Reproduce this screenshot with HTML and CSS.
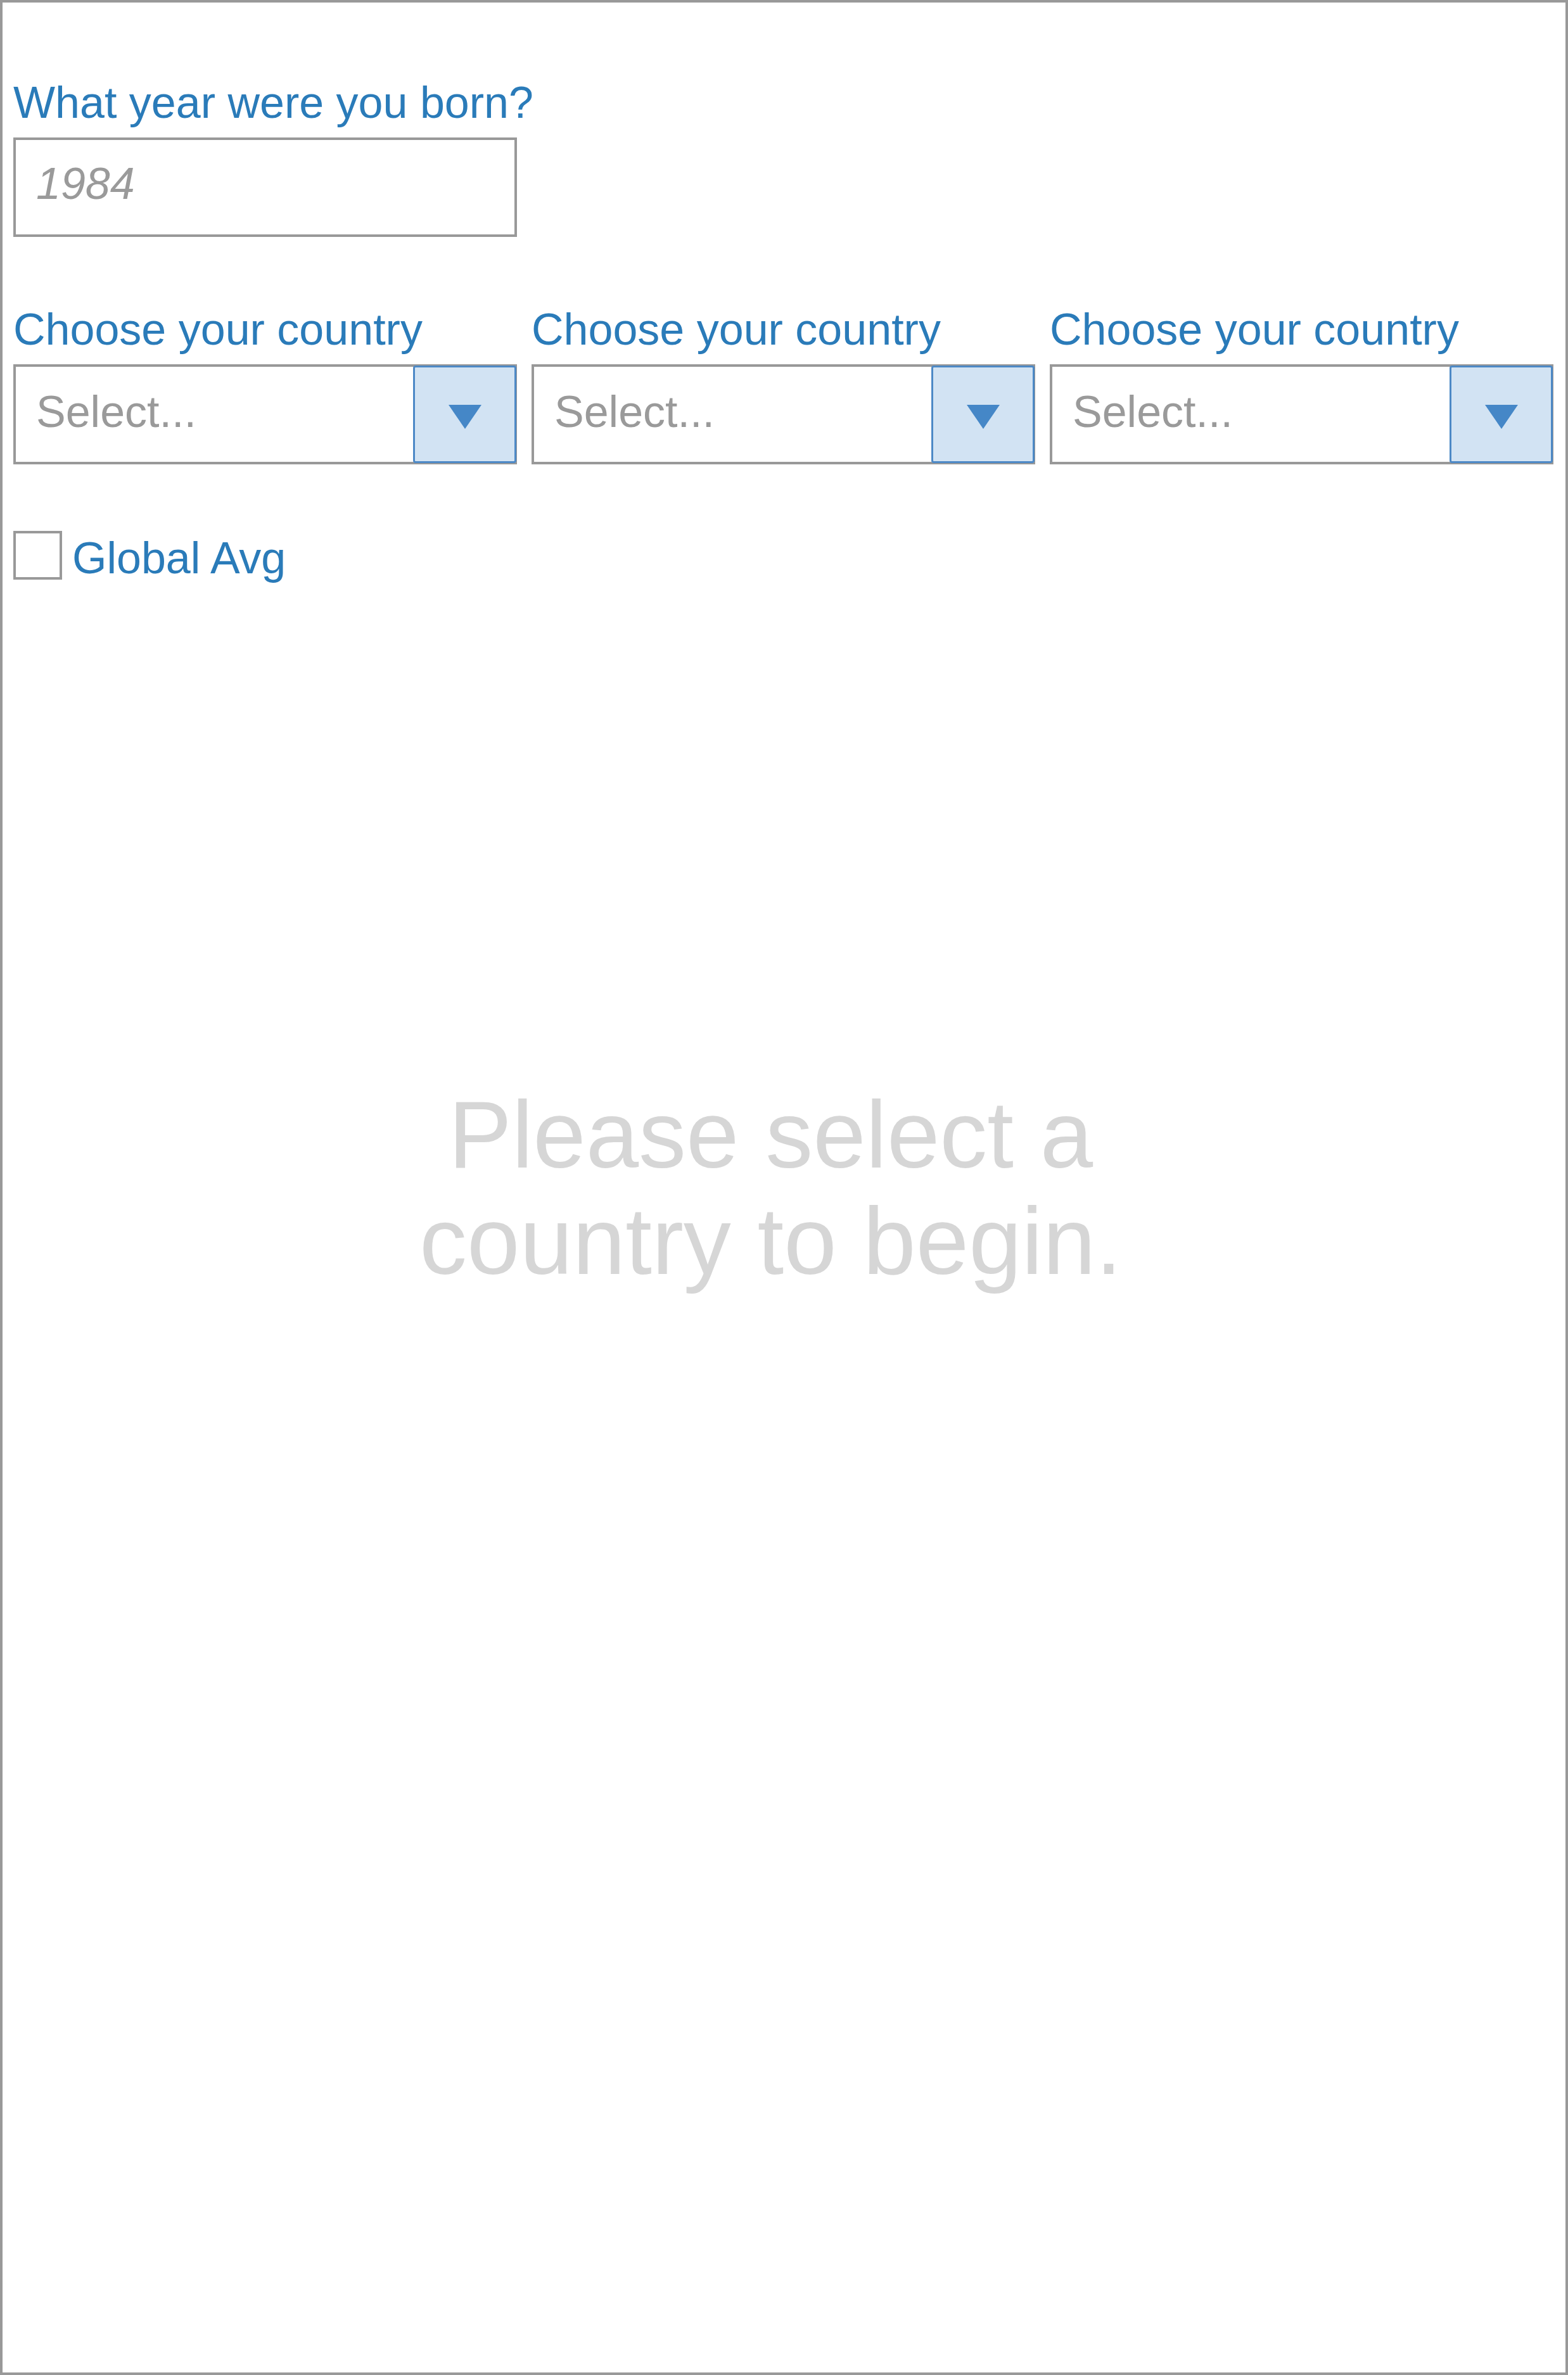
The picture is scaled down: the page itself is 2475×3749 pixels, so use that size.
FILE: index.html
```html
<!DOCTYPE html>
<html lang="en">
<head>
<meta charset="utf-8">
<title>Country picker</title>
<link rel="stylesheet" href="styles.css">
</head>
<body>
<div class="frame">
  <div class="row row-year">
    <div class="field">
      <label class="label">What year were you born?</label>
      <div class="textbox"><span class="placeholder placeholder-italic">1984</span></div>
    </div>
  </div>

  <div class="row row-countries">
    <div class="field">
      <label class="label">Choose your country</label>
      <div class="select">
        <span class="placeholder">Select...</span>
        <span class="select-btn"><svg class="caret" width="52" height="38" viewBox="0 0 52 38"><polygon points="0,0 52,0 26,38"/></svg></span>
      </div>
    </div>
    <div class="field">
      <label class="label">Choose your country</label>
      <div class="select">
        <span class="placeholder">Select...</span>
        <span class="select-btn"><svg class="caret" width="52" height="38" viewBox="0 0 52 38"><polygon points="0,0 52,0 26,38"/></svg></span>
      </div>
    </div>
    <div class="field">
      <label class="label">Choose your country</label>
      <div class="select">
        <span class="placeholder">Select...</span>
        <span class="select-btn"><svg class="caret" width="52" height="38" viewBox="0 0 52 38"><polygon points="0,0 52,0 26,38"/></svg></span>
      </div>
    </div>
  </div>

  <label class="check">
    <span class="check-box"></span>
    <span class="check-text">Global Avg</span>
  </label>

  <div class="empty">
    <p class="empty-text">Please select a country to begin.</p>
  </div>
</div>
</body>
</html>
```

FILE: styles.css
```css
html, body {
  margin: 0;
  padding: 0;
  background: #ffffff;
}

body {
  font-family: "Liberation Sans", Arial, sans-serif;
}

.frame {
  box-sizing: border-box;
  width: 2475px;
  height: 3749px;
  border: 4px solid #999999;
  padding: 118px 19px 0 17px;
  background: #ffffff;
}

.row {
  display: grid;
  grid-template-columns: repeat(3, minmax(0, 1fr));
  column-gap: 23px;
}

.row-countries {
  margin-top: 106px;
}

.field {
  display: flex;
  flex-direction: column;
  min-width: 0;
}

.label {
  display: block;
  font-size: 70px;
  line-height: 80px;
  color: #2a7bb9;
  margin-bottom: 15px;
  white-space: nowrap;
}

.textbox {
  box-sizing: border-box;
  height: 157px;
  border: 4px solid #999999;
  padding: 29px 0 0 32px;
}

.placeholder {
  display: block;
  font-size: 70px;
  line-height: 80px;
  color: #9a9a9a;
}

.placeholder-italic {
  font-style: italic;
}

.select {
  box-sizing: border-box;
  height: 158px;
  border: 4px solid #999999;
  display: flex;
  align-items: stretch;
}

.select .placeholder {
  flex: 1;
  padding: 31px 0 0 32px;
}

.select-btn {
  box-sizing: border-box;
  width: 163px;
  margin: -2px -3px -2px 0;
  border: 3px solid #4d89c6;
  border-radius: 4px;
  background: #d2e3f3;
  display: flex;
  align-items: center;
  justify-content: center;
  padding-top: 8px;
}

.caret {
  display: block;
  fill: #4587c7;
}

.check {
  display: flex;
  align-items: flex-start;
  gap: 16px;
  margin-top: 105px;
}

.check-box {
  box-sizing: border-box;
  width: 77px;
  height: 77px;
  border: 4px solid #999999;
  background: #ffffff;
}

.check-text {
  margin-top: 3px;
  font-size: 70px;
  line-height: 80px;
  color: #2a7bb9;
}

.empty {
  display: flex;
  justify-content: center;
  padding-right: 40px;
  margin-top: 786px;
}

.empty-text {
  margin: 0;
  width: 1300px;
  text-align: center;
  font-size: 150px;
  line-height: 168px;
  color: #d6d6d6;
}
```
